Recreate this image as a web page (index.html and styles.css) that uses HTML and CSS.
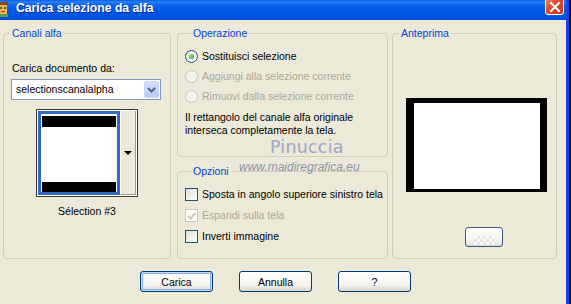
FILE: index.html
```html
<!DOCTYPE html>
<html lang="it">
<head>
    <meta charset="UTF-8">
    <meta name="viewport" content="width=device-width, initial-scale=1.0">
    <title>Carica selezione da alfa</title>
    <link rel="stylesheet" href="styles.css">
</head>
<body>
    <div class="window">
        <div class="titlebar">
            <svg class="app-icon" width="12" height="16" viewBox="0 0 12 16">
                <rect x="0" y="3" width="9" height="10" fill="#f0b060"/>
                <rect x="0" y="1" width="10" height="3" fill="#8a4a20"/>
                <rect x="2" y="6" width="2" height="2" fill="#2a7a2a"/>
                <rect x="6" y="6" width="2" height="2" fill="#2a7a2a"/>
                <rect x="3" y="10" width="4" height="1" fill="#c03020"/>
                <rect x="0" y="13" width="10" height="3" fill="#58a048"/>
            </svg>
            <span class="title">Carica selezione da alfa</span>
            <div class="close">
                <svg width="12" height="12" viewBox="0 0 12 12">
                    <path d="M2 2 L10 10 M10 2 L2 10" stroke="#fff" stroke-width="2" stroke-linecap="square"/>
                </svg>
            </div>
        </div>

        <div class="dialog">
            <div class="panels">
                <fieldset class="group channels">
                    <legend>Canali alfa</legend>
                    <div class="field-label">Carica documento da:</div>
                    <div class="select">
                        <span class="select-value">selectionscanalalpha</span>
                        <span class="select-btn">
                            <svg width="9" height="6" viewBox="0 0 9 6">
                                <path d="M1 1 L4.5 4.5 L8 1" fill="none" stroke="#4d6185" stroke-width="2"/>
                            </svg>
                        </span>
                    </div>
                    <div class="thumb-picker">
                        <div class="thumb">
                            <div class="thumb-img"></div>
                        </div>
                        <div class="thumb-drop"><span class="tri"></span></div>
                    </div>
                    <div class="thumb-name">Sélection #3</div>
                </fieldset>

                <div class="col-middle">
                    <fieldset class="group operation">
                        <legend>Operazione</legend>
                        <div class="row"><span class="radio checked"></span>Sostituisci selezione</div>
                        <div class="row disabled"><span class="radio"></span>Aggiungi alla selezione corrente</div>
                        <div class="row disabled"><span class="radio"></span>Rimuovi dalla selezione corrente</div>
                        <p class="note">Il rettangolo del canale alfa originale<br>interseca completamente la tela.</p>
                    </fieldset>

                    <fieldset class="group options">
                        <legend>Opzioni</legend>
                        <div class="row opt"><span class="check"></span>Sposta in angolo superiore sinistro tela</div>
                        <div class="row opt disabled"><span class="check checked"></span>Espandi sulla tela</div>
                        <div class="row opt"><span class="check"></span>Inverti immagine</div>
                    </fieldset>
                </div>

                <fieldset class="group preview">
                    <legend>Anteprima</legend>
                    <div class="preview-frame"></div>
                    <div class="preview-btn"><span class="checker"></span></div>
                </fieldset>

                <div class="watermark">
                    <div class="wm-name">Pinuccia</div>
                    <div class="wm-url">www.maidiregrafica.eu</div>
                </div>
            </div>

            <div class="actions">
                <button class="btn default">Carica</button>
                <button class="btn">Annulla</button>
                <button class="btn">?</button>
            </div>
        </div>
    </div>
</body>
</html>
```

FILE: styles.css
```css
html, body {
    margin: 0;
    background-color: #0b0b1e;
}

body {
    font-family: "Liberation Sans", Arial, sans-serif;
    font-size: 10.5px;
    line-height: 13px;
    color: #000;
}

.window {
    width: 566px;
    height: 304px;
    border-right: 3px solid #1743e0;
    display: flex;
    flex-direction: column;
    overflow: hidden;
}

/* title bar */
.titlebar {
    height: 20px;
    flex: none;
    display: flex;
    align-items: center;
    position: relative;
    background: linear-gradient(#0b5ce6 0, #2a80f2 2px, #0a62ee 5px, #0056e6 60%, #0051dc 100%);
}

.app-icon {
    margin-left: -2px;
    margin-top: -2px;
}

.title {
    margin-left: 6px;
    margin-top: -4px;
    color: #fff;
    font-weight: bold;
    font-size: 12.2px;
    text-shadow: 1px 1px 0 #0a2c8a;
}

.close {
    position: absolute;
    right: 2px;
    top: -4px;
    width: 19px;
    height: 19px;
    border: 1px solid #fff;
    border-radius: 3px;
    background: linear-gradient(135deg, #f08a6a, #e0482a 45%, #c23a1c);
    display: flex;
    align-items: center;
    justify-content: center;
    padding-top: 3px;
    box-sizing: border-box;
}

/* dialog body */
.dialog {
    flex: 1;
    background-color: #ece9d8;
    display: flex;
    flex-direction: column;
}

.panels {
    display: flex;
    padding: 7px 0 0 3px;
    position: relative;
}

.group {
    margin: 0;
    padding: 0;
    box-sizing: border-box;
    border: 1px solid #d0d0bf;
    border-radius: 4px;
    min-width: 0;
}

.group legend {
    margin-left: 6px;
    padding: 0 2px;
    color: #0046d5;
    line-height: 13px;
}

/* Canali alfa */
.channels {
    width: 168px;
    height: 232px;
    display: flex;
    flex-direction: column;
}

.field-label {
    margin: 22px 0 0 8px;
}

.select {
    margin: 4px 0 0 7px;
    width: 150px;
    height: 21px;
    box-sizing: border-box;
    border: 1px solid #7f9db9;
    background-color: #fff;
    display: flex;
    align-items: center;
    justify-content: space-between;
    padding: 0 1px 0 4px;
}

.select-btn {
    width: 15px;
    height: 17px;
    border-radius: 2px;
    background: linear-gradient(#d4e0fd, #b7cbf9);
    border: 1px solid #c3d3fd;
    box-sizing: border-box;
    display: flex;
    align-items: center;
    justify-content: center;
}

.thumb-picker {
    margin: 9px auto 0;
    width: 102px;
    height: 88px;
    box-sizing: border-box;
    border: 1px solid #3a3a3a;
    display: flex;
    padding: 1px;
    background-color: #fff;
}

.thumb {
    width: 82px;
    box-sizing: border-box;
    border: 3px solid #316ac5;
    background-color: #fff;
    padding: 1px;
}

.thumb-img {
    height: 100%;
    box-sizing: border-box;
    background-color: #fff;
    border-top: 11px solid #000;
    border-bottom: 10px solid #000;
    margin-top: 1px;
}

.thumb-drop {
    flex: 1;
    box-sizing: border-box;
    background-color: #ece9d8;
    border-left: 1px solid #fff;
    border-right: 1px solid #9d9a8c;
    border-bottom: 1px solid #9d9a8c;
    display: flex;
    align-items: center;
    justify-content: center;
}

.tri {
    width: 0;
    height: 0;
    border-left: 4px solid transparent;
    border-right: 4px solid transparent;
    border-top: 4px solid #000;
}

.thumb-name {
    margin-top: 8px;
    text-align: center;
}

/* middle column */
.col-middle {
    margin-left: 6px;
    width: 211px;
    display: flex;
    flex-direction: column;
    gap: 8px;
}

.operation {
    height: 130px;
    padding: 6px 0 0 7px;
}

.options {
    height: 94px;
    padding: 6px 0 0 7px;
}

.row {
    height: 20px;
    display: flex;
    align-items: center;
    gap: 4px;
    white-space: nowrap;
}

.row.opt {
    height: 21px;
}

.row.disabled {
    color: #aca899;
}

.radio {
    width: 13px;
    height: 13px;
    box-sizing: border-box;
    border-radius: 50%;
    border: 1px solid #1c5180;
    background: radial-gradient(circle at 60% 60%, #fff 30%, #dcd9ce 100%);
    display: flex;
    align-items: center;
    justify-content: center;
    flex: none;
}

.radio.checked::after {
    content: "";
    width: 5px;
    height: 5px;
    border-radius: 50%;
    background: radial-gradient(circle at 35% 35%, #8ee48e, #21a121);
}

.disabled .radio {
    border-color: #cac8bb;
    background: #f4f3ee;
}

.check {
    width: 13px;
    height: 13px;
    box-sizing: border-box;
    border: 1px solid #1c5180;
    background: linear-gradient(135deg, #dcdcd7, #fff);
    flex: none;
    position: relative;
}

.disabled .check {
    border-color: #cac8bb;
    background: #fff;
}

.check.checked::after {
    content: "";
    position: absolute;
    left: 3px;
    top: 1px;
    width: 3px;
    height: 6px;
    border-right: 2px solid #cac8bb;
    border-bottom: 2px solid #cac8bb;
    transform: rotate(40deg);
}

.note {
    margin: 5px 0 0;
}

/* Anteprima */
.preview {
    margin-left: 4px;
    width: 165px;
    height: 232px;
    display: flex;
    flex-direction: column;
}

.preview-frame {
    margin: 58px 0 0 13px;
    width: 141px;
    height: 94px;
    box-sizing: border-box;
    background-color: #fff;
    border-style: solid;
    border-color: #000;
    border-width: 5px 7px 3px 8px;
}

.preview-btn {
    margin: 35px 0 0 72px;
    width: 38px;
    height: 20px;
    box-sizing: border-box;
    border: 1px solid #3c5a87;
    border-radius: 3px;
    background: linear-gradient(#fff, #f0efea 80%, #dcd8cc);
    display: flex;
    align-items: flex-end;
    justify-content: center;
}

.checker {
    width: 20px;
    height: 9px;
    margin-bottom: 1px;
    background-image: conic-gradient(#e4e2da 25%, #fdfdfc 0 50%, #e4e2da 0 75%, #fdfdfc 0);
    background-size: 6px 6px;
    opacity: 0.8;
}

/* watermark over the middle column */
.watermark {
    position: absolute;
    left: 236px;
    top: 117px;
    pointer-events: none;
}

.wm-name {
    margin-left: 34px;
    font-family: "DejaVu Sans", sans-serif;
    font-size: 17.5px;
    line-height: 20px;
    color: #a3a9c2;
    text-shadow: 0 0 1px #d8dbe8;
    letter-spacing: 0.2px;
}

.wm-url {
    margin-left: 3px;
    margin-top: 3px;
    font-size: 12px;
    font-style: italic;
    line-height: 14px;
    color: #8d91a6;
}

/* buttons */
.actions {
    display: flex;
    gap: 26px;
    padding-left: 140px;
    margin-top: 12px;
}

.btn {
    width: 73px;
    height: 21px;
    padding: 0;
    border: 1px solid #003c74;
    border-radius: 3px;
    background: linear-gradient(#fff, #f3f2ec 70%, #d8d4c6);
    font-family: "Liberation Sans", Arial, sans-serif;
    font-size: 10.5px;
    color: #000;
    cursor: pointer;
}

.btn.default {
    box-shadow: inset 0 0 0 1px #c8dcfa, inset 0 0 0 2px #89ade4;
}
```
